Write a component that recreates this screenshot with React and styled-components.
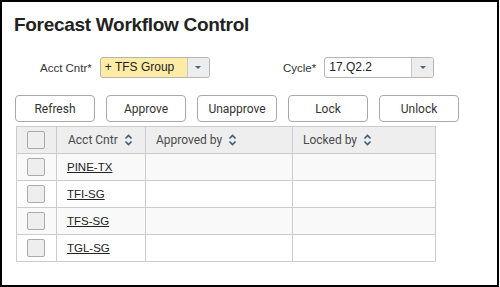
import styled, { createGlobalStyle } from "styled-components";

const GlobalStyle = createGlobalStyle`
  html, body {
    margin: 0;
    padding: 0;
    background: #fff;
  }
  * {
    box-sizing: border-box;
  }
`;

const Frame = styled.div`
  width: 499px;
  height: 287px;
  border: 2px solid #000;
  padding: 11px 0 0 12px;
  font-family: Roboto, "Liberation Sans", sans-serif;
  color: #333;
`;

const Title = styled.h1`
  margin: 0;
  font-family: "Liberation Sans", Arial, sans-serif;
  font-size: 19px;
  line-height: 24px;
  font-weight: 700;
  letter-spacing: -0.3px;
  color: #222;
`;

const FilterRow = styled.div`
  display: flex;
  align-items: center;
  margin-top: 20px;
  padding-left: 26px;
`;

const Field = styled.div`
  display: flex;
  align-items: center;
  gap: 8px;
  width: ${({ $width }) => $width}px;
`;

const Label = styled.label`
  font-family: "Liberation Sans", Arial, sans-serif;
  font-size: 11.5px;
  color: #333;
`;

const Select = styled.div`
  display: flex;
  width: 110px;
  height: 21px;
  border: 1px solid #b5b5b5;
  border-radius: 3px;
  overflow: hidden;
  background: ${({ $highlight }) => ($highlight ? "#feeba6" : "#fff")};
`;

const SelectValue = styled.span`
  flex: 1;
  padding-left: 4px;
  font-family: "Liberation Sans", Arial, sans-serif;
  font-size: 12px;
  line-height: 19px;
  color: #222;
`;

const SelectArrow = styled.span`
  width: 22px;
  display: flex;
  align-items: center;
  justify-content: center;
  border-left: 1px solid #c8c8c8;
  background: #ededed;
  &::after {
    content: "";
    border-left: 3.5px solid transparent;
    border-right: 3.5px solid transparent;
    border-top: 3.5px solid #4b6275;
  }
`;

const ButtonBar = styled.div`
  display: flex;
  gap: 11px;
  margin-top: 17px;
  padding-left: 1px;
`;

const Button = styled.button`
  width: 80px;
  height: 27px;
  border: 1px solid #a9a9a9;
  border-radius: 4px;
  background: #fff;
  font-family: Roboto, "Liberation Sans", sans-serif;
  font-size: 12px;
  color: #333;
  padding: 0;
`;

const Table = styled.table`
  margin: 4px 0 0 2px;
  width: 420px;
  border-collapse: collapse;
  font-size: 12px;
`;

const Th = styled.th`
  height: 27px;
  border: 1px solid #cccccc;
  background: #eeeeee;
  font-weight: 400;
  text-align: left;
  padding: 0 0 0 ${({ $pad }) => $pad ?? 10}px;
  color: #4a4a4a;
  width: ${({ $width }) => $width}px;
`;

const Row = styled.tr`
  background: ${({ $striped }) => ($striped ? "#f9f9f9" : "#fff")};
`;

const Td = styled.td`
  height: 27px;
  border: 1px solid #cccccc;
  padding: 0 0 0 10px;
`;

const CheckCell = styled.td`
  height: 27px;
  border: 1px solid #cccccc;
  padding: 0 0 0 10px;
`;

const Check = styled.span`
  display: block;
  width: 18px;
  height: 18px;
  border: 1px solid #aaaaaa;
  border-radius: 2px;
  background: #eeeeee;
`;

const HeadLabel = styled.span`
  display: inline-flex;
  align-items: center;
  gap: 6px;
`;

const Link = styled.a`
  font-family: "Liberation Sans", Arial, sans-serif;
  font-size: 11.5px;
  color: #222;
  text-decoration: underline;
`;

function SortIcon() {
  return (
    <svg width="9" height="12" viewBox="0 0 9 12" fill="none">
      <path d="M1.5 4.5 L4.5 1.5 L7.5 4.5" stroke="#3e5c78" strokeWidth="1.6" />
      <path d="M1.5 7.5 L4.5 10.5 L7.5 7.5" stroke="#3e5c78" strokeWidth="1.6" />
    </svg>
  );
}

const rows = ["PINE-TX", "TFI-SG", "TFS-SG", "TGL-SG"];
const actions = ["Refresh", "Approve", "Unapprove", "Lock", "Unlock"];

export default function App() {
  return (
    <>
      <GlobalStyle />
      <Frame>
        <Title>Forecast Workflow Control</Title>
        <FilterRow>
          <Field $width={243}>
            <Label>Acct Cntr*</Label>
            <Select $highlight>
              <SelectValue>+ TFS Group</SelectValue>
              <SelectArrow />
            </Select>
          </Field>
          <Field $width={160}>
            <Label>Cycle*</Label>
            <Select>
              <SelectValue>17.Q2.2</SelectValue>
              <SelectArrow />
            </Select>
          </Field>
        </FilterRow>
        <ButtonBar>
          {actions.map((a) => (
            <Button key={a}>{a}</Button>
          ))}
        </ButtonBar>
        <Table>
          <thead>
            <tr>
              <Th $width={40}>
                <Check />
              </Th>
              <Th $width={89} $pad={11}>
                <HeadLabel>
                  Acct Cntr <SortIcon />
                </HeadLabel>
              </Th>
              <Th $width={147}>
                <HeadLabel>
                  Approved by <SortIcon />
                </HeadLabel>
              </Th>
              <Th>
                <HeadLabel>
                  Locked by <SortIcon />
                </HeadLabel>
              </Th>
            </tr>
          </thead>
          <tbody>
            {rows.map((r, i) => (
              <Row key={r} $striped={i % 2 === 0}>
                <CheckCell>
                  <Check />
                </CheckCell>
                <Td>
                  <Link href="#">{r}</Link>
                </Td>
                <Td />
                <Td />
              </Row>
            ))}
          </tbody>
        </Table>
      </Frame>
    </>
  );
}
